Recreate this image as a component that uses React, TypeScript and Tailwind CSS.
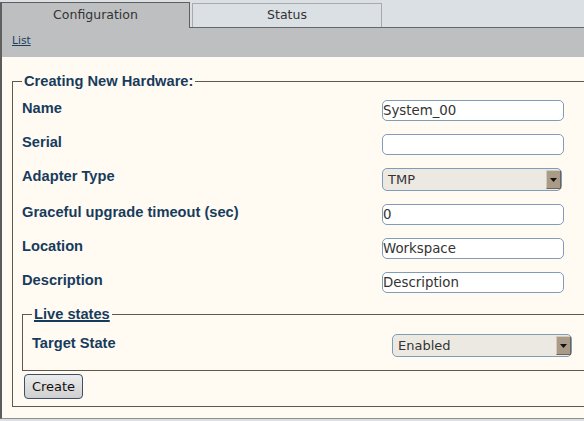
import React from "react";

const LABEL =
  "w-[360px] shrink-0 font-['Liberation_Sans',Arial,sans-serif] text-[14.67px] leading-[17px] font-bold text-[#183b5d]";
const LEGEND =
  "px-[2px] font-['Liberation_Sans',Arial,sans-serif] text-[14.67px] leading-[17px] font-bold text-[#183b5d]";

function TextInput({ value }: { value: string }) {
  return (
    <input
      readOnly
      value={value}
      className="h-[21px] w-[182px] shrink-0 rounded-[5px] border border-[#7f9cb8] bg-white px-0 font-['DejaVu_Sans',sans-serif] text-[13.33px] text-[#333] outline-none"
    />
  );
}

function Select({ value }: { value: string }) {
  return (
    <div className="flex h-[23px] w-[180px] shrink-0 items-center rounded-[5px] border border-[#7f9cb8] bg-[#ece9e3] pl-[5px]">
      <span className="flex-1 font-['DejaVu_Sans',sans-serif] text-[13px] text-[#333]">
        {value}
      </span>
      <span className="flex h-[19px] w-[15px] items-center justify-center border border-t-[#d3cbbd] border-l-[#d3cbbd] border-r-[#6e6354] border-b-[#6e6354] bg-[#a99b88]">
        <svg width="7" height="4" viewBox="0 0 7 4">
          <path d="M0 0h7L3.5 4z" fill="#111" />
        </svg>
      </span>
    </div>
  );
}

export default function App() {
  const rows: { label: string; value: string; select?: boolean }[] = [
    { label: "Name", value: "System_00" },
    { label: "Serial", value: "" },
    { label: "Adapter Type", value: "TMP", select: true },
    { label: "Graceful upgrade timeout (sec)", value: "0" },
    { label: "Location", value: "Workspace" },
    { label: "Description", value: "Description" },
  ];

  return (
    <div className="h-[421px] w-[584px] overflow-hidden bg-[#dbe0e4]">
      {/* Tabs */}
      <div className="flex h-[28px]">
        <div className="mt-[2px] flex h-[26px] w-[190px] shrink-0 items-center justify-center border-t border-r border-l-2 border-[#5f5f5f] bg-[#bebfc1] pb-px font-['DejaVu_Sans',sans-serif] text-[12.5px] text-[#333]">
          Configuration
        </div>
        <div className="flex-1 border-b border-[#666]">
          <div className="mt-[3px] ml-[2px] flex h-[24px] w-[190px] items-center justify-center border border-b-0 border-[#a8aaac] font-['DejaVu_Sans',sans-serif] text-[12.5px] text-[#333]">
            Status
          </div>
        </div>
      </div>

      {/* Sub navigation */}
      <div className="h-[29px] border-l-2 border-[#5f5f5f] bg-[#bebfc1] pt-[6px] pl-[10px] font-['DejaVu_Sans',sans-serif] text-[10.7px] leading-[13px]">
        <a className="text-[#1d3d62] underline">List</a>
      </div>

      {/* Content */}
      <div className="h-[362px] border-b border-l-2 border-b-[#8f8f8f] border-l-[#5c5c5c] bg-[#fffbf2] pt-[16px] pl-[10px]">
        <fieldset className="w-[620px] border border-[#5e584d] pt-[10px] pb-[7px] pl-[9px]">
          <legend className={LEGEND}>Creating New Hardware:</legend>

          <div className="flex flex-col gap-[13px]">
            {rows.map((r) => (
              <div
                key={r.label}
                className={`flex items-start ${r.select ? "h-[23px]" : "h-[21px]"}`}
              >
                <span className={LABEL}>{r.label}</span>
                {r.select ? <Select value={r.value} /> : <TextInput value={r.value} />}
              </div>
            ))}
          </div>

          {/* Live states */}
          <fieldset className="mt-[13px] border border-[#5e584d] pt-[11px] pb-[13px] pl-[9px]">
            <legend className={`${LEGEND} underline decoration-2`}>Live states</legend>
            <div className="flex h-[23px] items-start">
              <span className={`${LABEL} pt-px`}>Target State</span>
              <Select value="Enabled" />
            </div>
          </fieldset>

          <button className="mt-[3px] ml-[2px] block h-[25px] w-[59px] rounded-[4px] border border-[#3e5066] bg-linear-to-b from-[#ececec] to-[#cfcfcf] font-['DejaVu_Sans',sans-serif] text-[13px] text-[#111]">
            Create
          </button>
        </fieldset>
      </div>
    </div>
  );
}
